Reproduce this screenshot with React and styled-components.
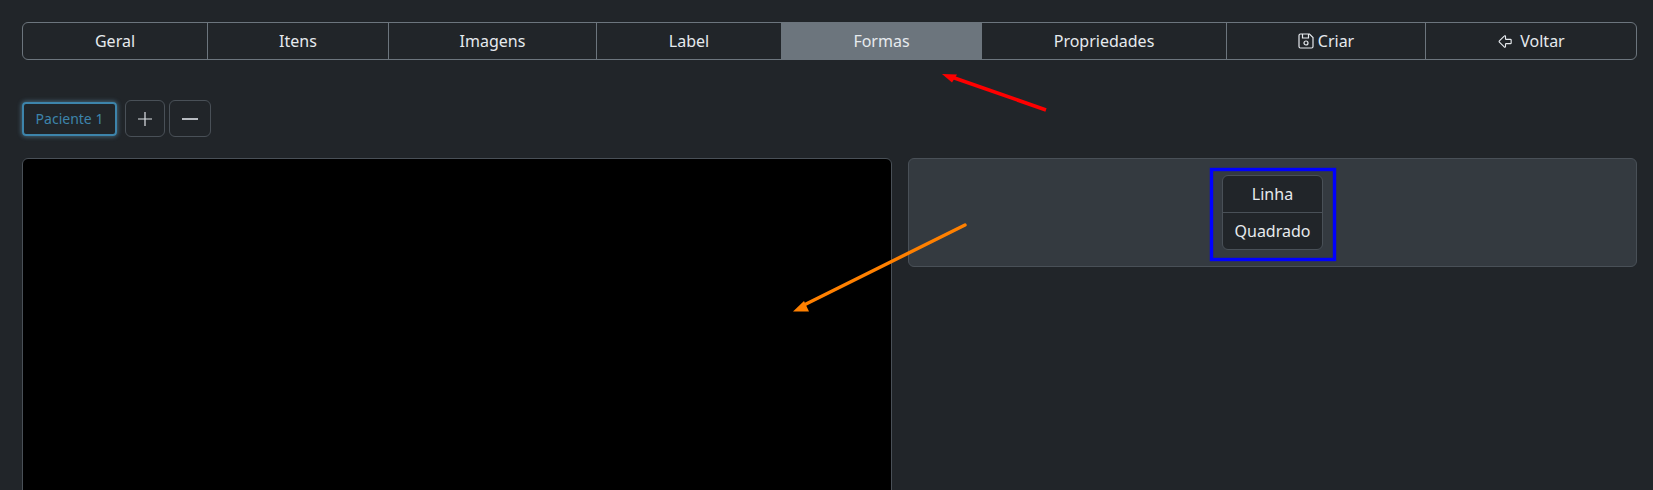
import React from 'react';
import styled, { createGlobalStyle } from 'styled-components';
import { ArrowBigLeft } from 'lucide-react';

const GlobalStyle = createGlobalStyle`
  * { box-sizing: border-box; }
  html, body { margin: 0; height: 100%; overflow: hidden; }
  body {
    background: #212529;
    color: #dee2e6;
    font-family: "Noto Sans", sans-serif;
    font-size: 16px;
  }
`;

const Page = styled.div`
  position: relative;
  height: 490px;
  padding: 22px 16px 0 22px;
  overflow: hidden;
`;

const Toolbar = styled.div`
  display: grid;
  grid-template-columns: 184px 181px 208px 185px 200px 245px 199px 1fr;
  height: 38px;
  border: 1px solid #6c757d;
  border-radius: 6px;
  overflow: hidden;
`;

const ToolButton = styled.button`
  display: flex;
  align-items: center;
  justify-content: center;
  gap: ${(p) => p.$gap || 0}px;
  padding: 0;
  font: inherit;
  color: #e6eaee;
  background: ${(p) => (p.$active ? '#6c757d' : 'transparent')};
  border: 0;
  border-left: 1px solid #6c757d;
  &:first-child { border-left: 0; }
`;

const TabsRow = styled.div`
  display: flex;
  align-items: center;
  gap: 4px;
  margin-top: 40px;
  height: 37px;
`;

const PatientTab = styled.button`
  width: 95px;
  height: 34px;
  margin-right: 4px;
  padding: 0;
  font: inherit;
  font-size: 14px;
  color: #3d84ab;
  background: transparent;
  border: 2px solid #3d84ab;
  border-radius: 4px;
  box-shadow: 0 0 4px 1px rgba(110, 168, 200, 0.45);
`;

const IconButton = styled.button`
  width: ${(p) => p.$width}px;
  height: 37px;
  display: flex;
  align-items: center;
  justify-content: center;
  padding: 0;
  background: transparent;
  border: 1px solid #495057;
  border-radius: 6px;
`;

const Workspace = styled.div`
  display: flex;
  align-items: flex-start;
  gap: 16px;
  margin-top: 21px;
`;

const Canvas = styled.div`
  flex: 0 0 870px;
  height: 360px;
  background: #000;
  border: 1px solid #495057;
  border-radius: 6px;
`;

const ShapesPanel = styled.div`
  flex: 1;
  height: 109px;
  display: flex;
  justify-content: center;
  padding-top: 16px;
  background: #343a40;
  border: 1px solid #495057;
  border-radius: 6px;
`;

const ShapeList = styled.ul`
  width: 101px;
  height: 75px;
  margin: 0;
  padding: 0;
  list-style: none;
  color: #e6eaee;
  background: #212529;
  border: 1px solid #495057;
  border-radius: 6px;
`;

const ShapeItem = styled.li`
  height: 36px;
  display: flex;
  align-items: center;
  justify-content: center;
  & + & {
    height: 37px;
    border-top: 1px solid #495057;
  }
`;

const Annotations = styled.svg`
  position: absolute;
  top: 0;
  left: 0;
  pointer-events: none;
`;

const SaveIcon = () => (
  <svg width="16" height="16" viewBox="0 0 16 16" fill="none" stroke="currentColor" strokeWidth="1.2">
    <path d="M2.5 1h9L15 4.5v9a1.5 1.5 0 0 1-1.5 1.5h-11A1.5 1.5 0 0 1 1 13.5v-11A1.5 1.5 0 0 1 2.5 1z" />
    <path d="M4.5 1v4h6V1" />
    <circle cx="8" cy="10" r="2" />
  </svg>
);

const tabs = ['Geral', 'Itens', 'Imagens', 'Label', 'Formas', 'Propriedades'];

export default function App() {
  return (
    <Page>
      <GlobalStyle />
      <Toolbar>
        {tabs.map((t) => (
          <ToolButton key={t} $active={t === 'Formas'}>{t}</ToolButton>
        ))}
        <ToolButton $gap={4}><SaveIcon /> Criar</ToolButton>
        <ToolButton $gap={6}><ArrowBigLeft size={17} strokeWidth={1.6} /> Voltar</ToolButton>
      </Toolbar>

      <TabsRow>
        <PatientTab>Paciente 1</PatientTab>
        <IconButton $width={40}>
          <svg width="14" height="14" viewBox="0 0 14 14"><path d="M7 0v14M0 7h14" stroke="#dee2e6" strokeWidth="1.2" /></svg>
        </IconButton>
        <IconButton $width={42}>
          <svg width="16" height="14" viewBox="0 0 16 14"><path d="M0 7h16" stroke="#dee2e6" strokeWidth="1.6" /></svg>
        </IconButton>
      </TabsRow>

      <Workspace>
        <Canvas />
        <ShapesPanel>
          <ShapeList>
            <ShapeItem>Linha</ShapeItem>
            <ShapeItem>Quadrado</ShapeItem>
          </ShapeList>
        </ShapesPanel>
      </Workspace>

      <Annotations width="1653" height="490">
        <path d="M1046 110L953 77.5" stroke="#fe0000" strokeWidth="3.6" />
        <path d="M942 74L957 74.5L952 82.5Z" fill="#fe0000" />
        <rect x="1211.5" y="169.5" width="123" height="90" fill="none" stroke="#0000fe" strokeWidth="3.4" />
        <path d="M965 225L802 306" stroke="#ff8000" strokeWidth="3.4" strokeLinecap="round" />
        <path d="M793 311.5L804 301L809 311.5Z" fill="#ff8000" />
      </Annotations>
    </Page>
  );
}
